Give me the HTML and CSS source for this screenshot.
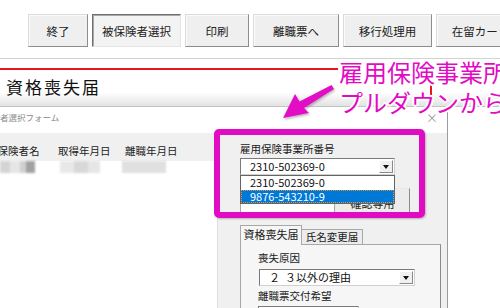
FILE: index.html
```html
<!DOCTYPE html>
<html lang="ja">
<head>
<meta charset="utf-8">
<title>資格喪失届</title>
<link rel="stylesheet" href="styles.css">
</head>
<body>
<div class="page">
  <div class="toolbar">
    <button class="btn w60">終了</button>
    <button class="btn pressed w89">被保険者選択</button>
    <button class="btn w64">印刷</button>
    <button class="btn w86">離職票へ</button>
    <button class="btn w89">移行処理用</button>
    <button class="btn w89">在留カード</button>
  </div>
  <div class="sep"></div>
  <div class="redline"></div>
  <div class="titleband"><h1 class="title">資格喪失届</h1></div>
  <div class="window">
    <div class="win-title">
      <span class="win-caption">被保険者選択フォーム</span>
      <span class="win-close">×</span>
    </div>
    <div class="win-body">
      <div class="grid">
        <div class="grid-head">
          <span class="col c1">被保険者名</span>
          <span class="col c2">取得年月日</span>
          <span class="col c3">離職年月日</span>
        </div>
        <div class="grid-row">
          <span class="blk b1"></span><span class="blk b2"></span><span class="blk b3"></span><span class="blk b4"></span>
          <span class="gap g1"></span>
          <span class="blk b5"></span><span class="blk b6"></span><span class="blk b7"></span>
          <span class="gap g2"></span>
          <span class="blk b8"></span>
        </div>
      </div>
      <div class="panel">
        <div class="lbl">雇用保険事業所番号</div>
        <div class="combo c-office">
          <span class="combo-text">2310-502369-0</span>
          <span class="combo-btn"><span class="tri"></span></span>
        </div>
        <div class="row2">
          <div class="txt"></div>
          <div class="sbtn">確認専用</div>
        </div>
        <div class="tabs">
          <div class="tab sel">資格喪失届</div>
          <div class="tab">氏名変更届</div>
        </div>
        <div class="tabpage">
          <div class="lbl in">喪失原因</div>
          <div class="combo c-reason">
            <span class="combo-text">２&nbsp;&nbsp;３以外の理由</span>
            <span class="combo-btn"><span class="tri"></span></span>
          </div>
          <div class="lbl in lbl2">離職票交付希望</div>
          <div class="combo c-issue"></div>
        </div>
      </div>
    </div>
  </div>
</div>

<div class="ddlist">
  <div class="ddi">2310-502369-0</div>
  <div class="ddi hl">9876-543210-9</div>
</div>
<div class="callout-box"></div>
<div class="redtick"></div>
<div class="callout-text">雇用保険事業所<br>プルダウンから</div>
<svg class="arrow" width="80" height="60" viewBox="270 78 80 60" xmlns="http://www.w3.org/2000/svg">
  <defs>
    <filter id="sh" x="-20%" y="-20%" width="140%" height="140%">
      <feDropShadow dx="1" dy="1.5" stdDeviation="1" flood-color="#000" flood-opacity="0.3"/>
    </filter>
  </defs>
  <polygon filter="url(#sh)" fill="#e20bc4" points="283,118 309,113 304,108 334,89 331.5,85 299.5,101.5 295,94"/>
</svg>
</body>
</html>
```
FILE: styles.css
```css
* { box-sizing: border-box; margin: 0; padding: 0; }
html, body { width: 500px; height: 308px; overflow: hidden; background: #fff; }
body {
  position: relative;
  font-family: "Noto Sans CJK JP", "Noto Sans", sans-serif;
  color: #1a1a1a;
}
.page { width: 500px; height: 308px; overflow: hidden; }

.toolbar { display: flex; gap: 4px; padding: 14px 0 0 28px; height: 47px; overflow: hidden; }
.btn {
  flex: 0 0 auto; height: 33px;
  font: 11.5px "Noto Sans CJK JP", sans-serif; color: #222;
  background: #efefef;
  border: 1px solid; border-color: #dadada #8c8c8c #8c8c8c #dadada;
  box-shadow: inset 1px 1px 0 #fbfbfb;
}
.btn.pressed {
  border-color: #6e6e6e #e4e4e4 #e4e4e4 #6e6e6e;
  box-shadow: inset 1px 1px 0 #a8a8a8;
  background: #f3f3f3;
}
.w60 { width: 60px; } .w64 { width: 64px; } .w86 { width: 86px; } .w89 { width: 89px; }

.sep { height: 1px; background: #d2d2d2; margin-top: 11px; }
.redline { height: 2px; width: 338px; background: #e8141e; margin-top: 9px; }
.titleband {
  height: 37px; padding: 7px 0 0 6px;
  background: linear-gradient(#fff 0%, #fff 62%, #e3e3e3 100%);
  border-bottom: 1px solid #c4c4c4;
}
.title { font-size: 17px; font-weight: normal; letter-spacing: 2px; line-height: 20px; color: #111; }

.window { width: 448px; border-right: 1px solid #9c9c9c; }
.win-title { height: 26px; background: #fff; display: flex; justify-content: space-between; padding: 4px 9px 0 0; }
.win-caption { font-size: 8.5px; line-height: 12px; color: #8a8a8a; margin-left: -25.5px; }
.win-close { font-size: 12px; line-height: 14px; color: #9a9a9a; }

.win-body { display: flex; height: 175px; }
.grid { width: 218px; background: #fff; border-right: 1px solid #dedede; }
.grid-head { height: 28px; background: #f0f0f0; display: flex; align-items: center; padding-top: 6px; font-size: 10.5px; color: #222; }
.col { flex: 0 0 auto; white-space: nowrap; }
.c1 { width: 71px; margin-left: -13px; }
.c2 { width: 67px; }
.grid-row { display: flex; height: 12px; filter: blur(1.2px); }
.blk { flex: 0 0 auto; height: 12px; }
.b1 { width: 10px; background: #d4d4d4; }
.b2 { width: 10px; background: #e6e6e6; }
.b3 { width: 6px; background: #d0d0d0; }
.b4 { width: 9px; background: #a2a2a2; }
.g1 { width: 25px; }
.b5 { width: 14px; background: #e8e8e8; }
.b6 { width: 14px; background: #d8d8d8; }
.b7 { width: 12px; background: #e6e6e6; }
.g2 { width: 22px; }
.b8 { width: 44px; background: #e0e0e0; }
.gap { flex: 0 0 auto; }

.panel { flex: 1; background: #f0f0f0; padding: 10px 0 0 22px; }
.lbl { font-size: 10.5px; line-height: 12px; color: #1a1a1a; white-space: nowrap; }
.combo {
  display: flex; height: 17px; background: #fff;
  border: 1px solid; border-color: #7a7a7a #d0d0d0 #d0d0d0 #7a7a7a;
  font-size: 11px; color: #111;
}
.c-office { width: 155px; margin-top: 3px; }
.combo-text { flex: 1; padding-left: 9px; line-height: 15px; white-space: nowrap; }
.combo-btn {
  width: 14px; margin: 1px; background: #f0f0f0;
  border: 1px solid; border-color: #fff #8a8a8a #8a8a8a #fff;
  display: flex; align-items: center; justify-content: center;
}
.tri { width: 0; height: 0; border-left: 3.5px solid transparent; border-right: 3.5px solid transparent; border-top: 4px solid #111; }

.row2 { display: flex; margin-top: 13px; height: 30px; }
.txt { width: 95px; height: 24px; margin-top: 3px; background: #fff; border: 1px solid #a8a8a8; }
.sbtn {
  width: 75px; height: 30px; background: #ececec;
  border: 1px solid; border-color: #e8e8e8 #8c8c8c #8c8c8c #e8e8e8;
  font-size: 11px; line-height: 28px; text-align: center; color: #222;
}

.tabs { display: flex; align-items: flex-end; margin-top: 7px; height: 19px; }
.tab {
  height: 15px; width: 61px; font-size: 10.5px; line-height: 13px; text-align: center;
  background: #ececec; border: 1px solid #a8a8a8; border-left: none; border-bottom: none;
  white-space: nowrap;
}
.tab.sel {
  height: 20px; width: 62px; margin-bottom: -1px; position: relative;
  background: #f6f6f6; border-left: 1px solid #a8a8a8; line-height: 17px; font-size: 11px;
}
.tabpage {
  width: 201px; height: 70px; background: #f6f6f6;
  border: 1px solid #a8a8a8; border-right-color: #8a8a8a;
  padding: 7px 0 0 17px;
}
.c-reason { width: 156px; margin: 5px 0 0 1px; }
.lbl2 { margin-top: 4px; }
.c-issue { width: 101px; margin-top: 4px; height: 17px; }

.ddlist {
  position: absolute; left: 240px; top: 175px; width: 155px; height: 29px;
  background: #fff; border: 1px solid #646464; font-size: 11px; color: #111;
}
.ddi { height: 13.5px; line-height: 13px; padding-left: 9px; }
.ddi.hl { background: #0078d7; color: #fff; outline: 1px dotted #d89a3c; outline-offset: -1px; }

.callout-box {
  position: absolute; left: 214px; top: 129px; width: 211px; height: 89px;
  border: 6px solid #e20bc4; border-radius: 5px;
  box-shadow: 1px 1px 2px rgba(0, 0, 0, 0.25);
}
.redtick { position: absolute; left: 430px; top: 80px; width: 2px; height: 15px; background: #e8141e; }
.callout-text {
  position: absolute; left: 339px; top: 57px;
  font-size: 24px; line-height: 30px; color: #e20bc4; white-space: nowrap;
  text-shadow: 1px 1px 0 #fff, -1px -1px 0 #fff, 1px -1px 0 #fff, -1px 1px 0 #fff,
               2px 0 0 #fff, -2px 0 0 #fff, 0 2px 0 #fff, 0 -2px 0 #fff;
}
.arrow { position: absolute; left: 270px; top: 78px; }
```
